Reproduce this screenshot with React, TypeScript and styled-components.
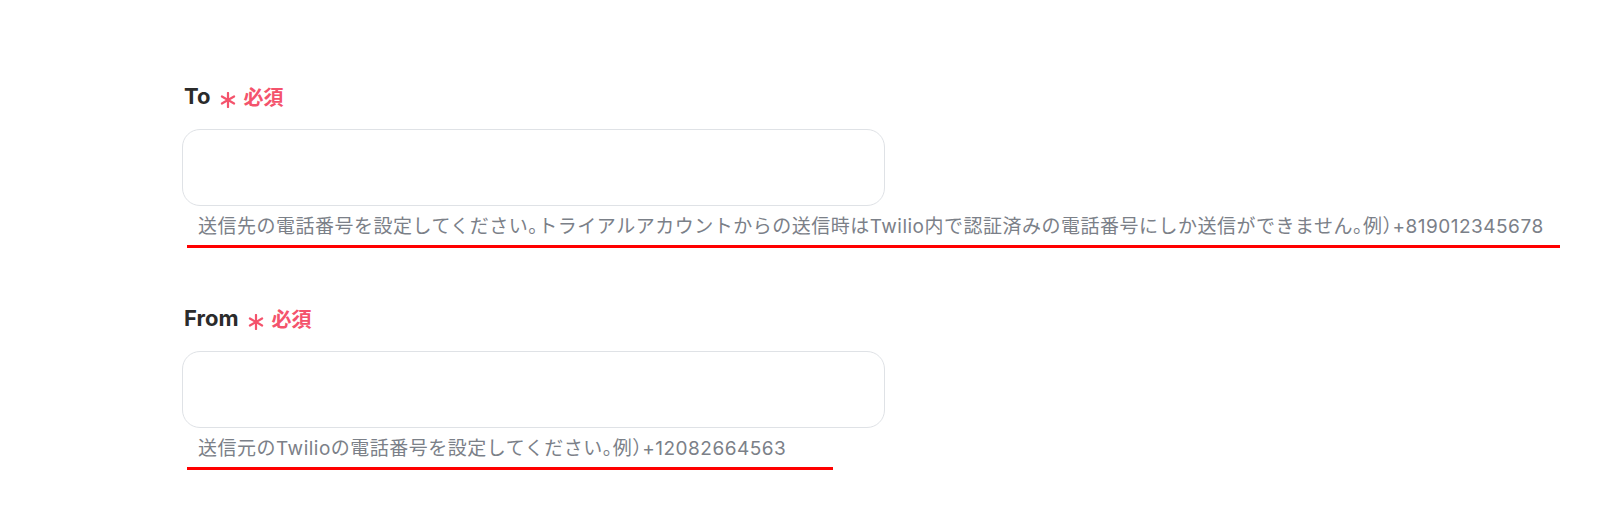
import React from "react";
import styled, { createGlobalStyle } from "styled-components";

const GlobalStyle = createGlobalStyle`
  html, body {
    margin: 0;
    padding: 0;
    background: #ffffff;
  }
  body {
    font-family: "Inter", "Noto Sans CJK JP", sans-serif;
  }
`;

const Page = styled.div`
  display: flex;
  flex-direction: column;
  gap: 55px;
  padding: 81px 0 0 182px;
  height: 507px;
  box-sizing: border-box;
  overflow: hidden;
`;

const Field = styled.div`
  display: flex;
  flex-direction: column;
  align-items: flex-start;
`;

const LabelRow = styled.div`
  display: flex;
  align-items: center;
  height: 30px;
  padding-left: 2px;
`;

const LabelText = styled.span`
  font-family: "Inter", "Noto Sans CJK JP", sans-serif;
  font-weight: 700;
  font-size: 22px;
  color: #2b2b2b;
`;

const Star = styled.svg`
  width: 16px;
  height: 16px;
  margin: 7px 7px 0 10px;
  flex: none;
`;

const Required = styled.span`
  font-family: "Noto Sans CJK JP", sans-serif;
  font-weight: 700;
  font-size: 20px;
  color: #f4536c;
`;

const Input = styled.input`
  margin-top: 18px;
  width: 703px;
  height: 77px;
  box-sizing: border-box;
  border: 1.5px solid #dfe2e6;
  border-radius: 18px;
  background: #ffffff;
  outline: none;
  padding: 0 18px;
  font-size: 18px;
`;

const Help = styled.div`
  margin-top: 9px;
  padding-left: 16px;
  height: 24px;
  line-height: 24px;
  font-family: "Inter", "Noto Sans CJK JP", sans-serif;
  font-size: 19px;
  letter-spacing: 0.5px;
  font-feature-settings: "halt";
  color: #7b8088;
  white-space: nowrap;
`;

const Underline = styled.div<{ $width: number }>`
  margin-top: 6px;
  margin-left: 5px;
  width: ${(p) => p.$width}px;
  height: 3px;
  background: #ff0000;
`;

const Asterisk = () => (
  <Star viewBox="0 0 16 16" aria-hidden>
    <g stroke="#f4536c" strokeWidth="2.2" strokeLinecap="round">
      <line x1="8" y1="1" x2="8" y2="15" />
      <line x1="1.9" y1="4.5" x2="14.1" y2="11.5" />
      <line x1="1.9" y1="11.5" x2="14.1" y2="4.5" />
    </g>
  </Star>
);

type FieldProps = { label: string; help: string; lineWidth: number };

const FormField = ({ label, help, lineWidth }: FieldProps) => (
  <Field>
    <LabelRow>
      <LabelText>{label}</LabelText>
      <Asterisk />
      <Required>必須</Required>
    </LabelRow>
    <Input type="text" />
    <Help>{help}</Help>
    <Underline $width={lineWidth} />
  </Field>
);

export default function App() {
  return (
    <>
      <GlobalStyle />
      <Page>
        <FormField
          label="To"
          help="送信先の電話番号を設定してください。トライアルアカウントからの送信時はTwilio内で認証済みの電話番号にしか送信ができません。例）+819012345678"
          lineWidth={1373}
        />
        <FormField
          label="From"
          help="送信元のTwilioの電話番号を設定してください。例）+12082664563"
          lineWidth={646}
        />
      </Page>
    </>
  );
}
